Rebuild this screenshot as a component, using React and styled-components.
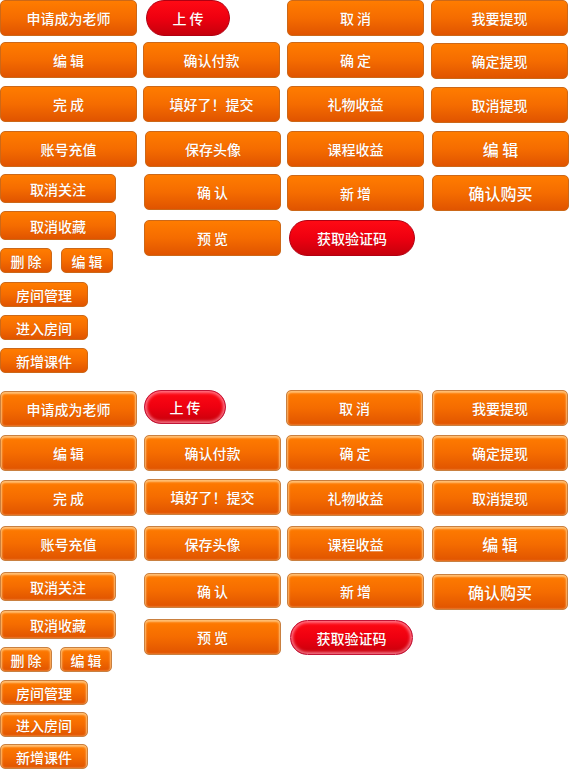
import React from "react";
import styled, { createGlobalStyle, css } from "styled-components";

const Global = createGlobalStyle`
  html, body { margin: 0; padding: 0; background: #ffffff; }
  body { font-family: "Noto Sans CJK SC", "Noto Sans", sans-serif; }
`;

const Page = styled.div`
  width: 579px;
  height: 769px;
  overflow: hidden;
`;

const Sheet = styled.section`
  display: flex;
  align-items: flex-start;
  margin-top: ${(p) => p.$top || 0}px;
`;

const Column = styled.div`
  display: flex;
  flex-direction: column;
  align-items: flex-start;
  width: ${(p) => p.$w}px;
  flex: none;
`;

const Pair = styled.div`
  display: flex;
  margin-top: ${(p) => p.$mt || 0}px;
`;

const orange = css`
  background: linear-gradient(to bottom, #ff7c00 0%, #f56c00 50%, #e05400 100%);
  border: 1px solid #cc6818;
  border-radius: 5px;
`;

const red = css`
  background: linear-gradient(to bottom, #ff0a14 0%, #ee0010 50%, #c6000c 100%);
  border: 1px solid #b10012;
  border-radius: 18px;
`;

const Btn = styled.button`
  box-sizing: border-box;
  display: flex;
  align-items: center;
  justify-content: center;
  flex: none;
  width: ${(p) => p.$w}px;
  height: ${(p) => p.$h}px;
  margin: ${(p) => p.$mt || 0}px 0 0 ${(p) => p.$ml || 0}px;
  padding: 0;
  color: #ffffff;
  font-family: "Noto Sans CJK SC", "Noto Sans", sans-serif;
  font-weight: 500;
  font-size: ${(p) => p.$fs || 14}px;
  line-height: 1;
  white-space: pre;
  text-shadow: 0 0 1px rgba(120, 40, 0, 0.3);
  cursor: pointer;
  ${(p) => (p.$red ? red : orange)}
  ${(p) =>
    p.$glow &&
    !p.$red &&
    css`
      border-color: #c98040;
      box-shadow: inset 0 1px 2px 1px rgba(255, 200, 130, 0.9);
    `}
  ${(p) =>
    p.$glow &&
    p.$red &&
    css`
      border-color: #c01638;
      box-shadow: inset 0 0 3px 2px rgba(255, 150, 170, 0.75);
    `}
`;

const sheet1 = [
  {
    w: 143,
    items: [
      { t: "申请成为老师", w: 137, h: 36, mt: 0 },
      { t: "编 辑", w: 137, h: 36, mt: 6 },
      { t: "完 成", w: 137, h: 36, mt: 8 },
      { t: "账号充值", w: 137, h: 36, mt: 9 },
      { t: "取消关注", w: 116, h: 29, mt: 7 },
      { t: "取消收藏", w: 116, h: 29, mt: 8 },
      { pair: true, mt: 8, items: [
        { t: "删 除", w: 52, h: 25, ml: 0 },
        { t: "编 辑", w: 52, h: 25, ml: 9 },
      ] },
      { t: "房间管理", w: 88, h: 25, mt: 9 },
      { t: "进入房间", w: 88, h: 25, mt: 8 },
      { t: "新增课件", w: 88, h: 25, mt: 8 },
    ],
  },
  {
    w: 143,
    items: [
      { t: "上 传", w: 84, h: 36, mt: 0, ml: 3, red: true },
      { t: "确认付款", w: 137, h: 36, mt: 6, ml: 0 },
      { t: "填好了！提交", w: 137, h: 36, mt: 8, ml: 0 },
      { t: "保存头像", w: 136, h: 36, mt: 9, ml: 2 },
      { t: "确 认", w: 137, h: 36, mt: 7, ml: 1 },
      { t: "预 览", w: 137, h: 36, mt: 10, ml: 1 },
    ],
  },
  {
    w: 144,
    items: [
      { t: "取 消", w: 137, h: 36, mt: 0, ml: 1 },
      { t: "确 定", w: 137, h: 36, mt: 6, ml: 1 },
      { t: "礼物收益", w: 137, h: 36, mt: 8, ml: 1 },
      { t: "课程收益", w: 137, h: 36, mt: 9, ml: 1 },
      { t: "新 增", w: 137, h: 36, mt: 8, ml: 1 },
      { t: "获取验证码", w: 126, h: 36, mt: 9, ml: 3, red: true },
    ],
  },
  {
    w: 149,
    items: [
      { t: "我要提现", w: 137, h: 36, mt: 0, ml: 1 },
      { t: "确定提现", w: 137, h: 36, mt: 7, ml: 1 },
      { t: "取消提现", w: 137, h: 36, mt: 8, ml: 1 },
      { t: "编 辑", w: 137, h: 36, mt: 8, ml: 2, fs: 16 },
      { t: "确认购买", w: 137, h: 36, mt: 8, ml: 2, fs: 16 },
    ],
  },
];

const sheet2 = [
  {
    w: 143,
    items: [
      { t: "申请成为老师", w: 137, h: 36, mt: 1 },
      { t: "编 辑", w: 137, h: 36, mt: 8 },
      { t: "完 成", w: 137, h: 36, mt: 9 },
      { t: "账号充值", w: 137, h: 35, mt: 10 },
      { t: "取消关注", w: 116, h: 29, mt: 11 },
      { t: "取消收藏", w: 116, h: 29, mt: 9 },
      { pair: true, mt: 8, items: [
        { t: "删 除", w: 52, h: 25, ml: 0 },
        { t: "编 辑", w: 52, h: 25, ml: 8 },
      ] },
      { t: "房间管理", w: 88, h: 25, mt: 8 },
      { t: "进入房间", w: 88, h: 25, mt: 7 },
      { t: "新增课件", w: 88, h: 25, mt: 7 },
    ],
  },
  {
    w: 143,
    items: [
      { t: "上 传", w: 82, h: 34, mt: 0, ml: 1, red: true },
      { t: "确认付款", w: 137, h: 36, mt: 11, ml: 1 },
      { t: "填好了！提交", w: 137, h: 36, mt: 8, ml: 1 },
      { t: "保存头像", w: 137, h: 35, mt: 11, ml: 1 },
      { t: "确 认", w: 137, h: 35, mt: 12, ml: 1 },
      { t: "预 览", w: 137, h: 36, mt: 11, ml: 1 },
    ],
  },
  {
    w: 144,
    items: [
      { t: "取 消", w: 137, h: 36, mt: 0, ml: 0 },
      { t: "确 定", w: 138, h: 36, mt: 9, ml: 0 },
      { t: "礼物收益", w: 137, h: 36, mt: 9, ml: 1 },
      { t: "课程收益", w: 137, h: 35, mt: 10, ml: 1 },
      { t: "新 增", w: 137, h: 35, mt: 12, ml: 1 },
      { t: "获取验证码", w: 123, h: 35, mt: 12, ml: 4, red: true },
    ],
  },
  {
    w: 149,
    items: [
      { t: "我要提现", w: 136, h: 36, mt: 0, ml: 2 },
      { t: "确定提现", w: 136, h: 36, mt: 9, ml: 2 },
      { t: "取消提现", w: 136, h: 36, mt: 9, ml: 2 },
      { t: "编 辑", w: 136, h: 36, mt: 10, ml: 2, fs: 16 },
      { t: "确认购买", w: 136, h: 36, mt: 12, ml: 2, fs: 16 },
    ],
  },
];

function Button({ b, glow }) {
  return (
    <Btn
      $w={b.w}
      $h={b.h}
      $mt={b.mt}
      $ml={b.ml}
      $fs={b.fs}
      $red={b.red}
      $glow={glow}
    >
      {b.t}
    </Btn>
  );
}

function ButtonSheet({ cols, glow, top }) {
  return (
    <Sheet $top={top}>
      {cols.map((col, ci) => (
        <Column key={ci} $w={col.w}>
          {col.items.map((b, i) =>
            b.pair ? (
              <Pair key={i} $mt={b.mt}>
                {b.items.map((s, j) => (
                  <Button key={j} b={s} glow={glow} />
                ))}
              </Pair>
            ) : (
              <Button key={i} b={b} glow={glow} />
            )
          )}
        </Column>
      ))}
    </Sheet>
  );
}

export default function App() {
  return (
    <Page>
      <Global />
      <ButtonSheet cols={sheet1} />
      <ButtonSheet cols={sheet2} glow top={17} />
    </Page>
  );
}
